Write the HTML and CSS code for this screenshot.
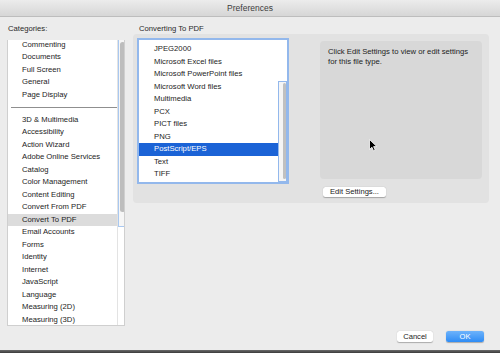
FILE: index.html
```html
<!DOCTYPE html>
<html>
<head>
<meta charset="utf-8">
<link rel="stylesheet" href="styles.css">
</head>
<body>
<div class="window">
  <div class="titlebar">Preferences</div>
  <div class="main">
    <div class="cats">
      <div class="label">Categories:</div>
      <div class="catlist">
        <div class="catitems">
          <div class="row">Commenting</div>
          <div class="row">Documents</div>
          <div class="row">Full Screen</div>
          <div class="row">General</div>
          <div class="row">Page Display</div>
          <div class="sep"></div>
          <div class="row">3D &amp; Multimedia</div>
          <div class="row">Accessibility</div>
          <div class="row">Action Wizard</div>
          <div class="row">Adobe Online Services</div>
          <div class="row">Catalog</div>
          <div class="row">Color Management</div>
          <div class="row">Content Editing</div>
          <div class="row">Convert From PDF</div>
          <div class="row current">Convert To PDF</div>
          <div class="row">Email Accounts</div>
          <div class="row">Forms</div>
          <div class="row">Identity</div>
          <div class="row">Internet</div>
          <div class="row">JavaScript</div>
          <div class="row">Language</div>
          <div class="row">Measuring (2D)</div>
          <div class="row">Measuring (3D)</div>
        </div>
        <div class="vscroll"><div class="track"><div class="thumb"></div></div></div>
      </div>
    </div>
    <div class="pane">
      <div class="label pane-label">Converting To PDF</div>
      <div class="group">
        <div class="typelist">
          <div class="types">
            <div class="trow">JPEG2000</div>
            <div class="trow">Microsoft Excel files</div>
            <div class="trow">Microsoft PowerPoint files</div>
            <div class="trow">Microsoft Word files</div>
            <div class="trow">Multimedia</div>
            <div class="trow">PCX</div>
            <div class="trow">PICT files</div>
            <div class="trow">PNG</div>
            <div class="trow selected">PostScript/EPS</div>
            <div class="trow">Text</div>
            <div class="trow">TIFF</div>
          </div>
          <div class="tscroll"><div class="tthumb"></div></div>
        </div>
        <div class="detail">
          <div class="desc">Click Edit Settings to view or edit settings for this file type.</div>
          <button class="btn edit">Edit Settings...</button>
        </div>
      </div>
    </div>
  </div>
  <div class="footer">
    <button class="btn cancel">Cancel</button>
    <button class="btn primary">OK</button>
  </div>
  <div class="strip"></div>
  <svg class="cursor" width="9" height="13" viewBox="0 0 9 13">
    <path d="M0.5 0.5 L0.5 10.5 L2.9 8.2 L4.6 11.9 L6.2 11.2 L4.6 7.6 L7.8 7.6 Z" fill="#000" stroke="#fff" stroke-width="0.8"/>
  </svg>
</div>
</body>
</html>
```
FILE: styles.css
```css
* { box-sizing: border-box; }
html, body { margin: 0; padding: 0; }
body {
  width: 500px;
  height: 353px;
  overflow: hidden;
  background: #ececec;
  font-family: "Liberation Sans", Arial, sans-serif;
  font-size: 7.7px;
  color: #1c1c1c;
}
.window {
  position: relative;
  width: 500px;
  height: 353px;
  display: flex;
  flex-direction: column;
}
.titlebar {
  height: 17px;
  line-height: 17px;
  text-align: center;
  font-size: 8.5px;
  color: #3d3d3d;
  background: linear-gradient(#ececec, #d6d6d6);
  border-bottom: 1px solid #bdbdbd;
}
.main {
  display: flex;
  padding-left: 7px;
  height: 309px;
}
.cats { width: 118px; }
.label {
  margin-top: 7px;
  height: 10px;
  line-height: 10px;
  padding-left: 1px;
  color: #2a2a2a;
}
.cats .label { margin-bottom: 6px; }
.catlist {
  height: 286px;
  background: #fff;
  border: 1px solid #cfcfcf;
  border-top: none;
  display: flex;
  overflow: hidden;
}
.catitems {
  flex: 1;
  padding-top: 0;
  margin-top: -1.5px;
}
.row {
  height: 12.5px;
  line-height: 12.5px;
  padding-left: 14px;
  white-space: nowrap;
}
.row.current { background: #dcdcdc; }
.sep {
  height: 12.5px;
  padding: 6px 0 0 3px;
}
.sep::after {
  content: "";
  display: block;
  height: 1px;
  background: #8f8f8f;
}
.vscroll {
  width: 7px;
  border-left: 1px solid #e3e3e3;
  margin-left: -1px;
}
.track {
  height: 187px;
  border-left: 1px solid #a9c8f0;
  border-bottom: 1px solid #a9c8f0;
  background: #f6f6f6;
  padding: 2px 1px 0 1px;
}
.thumb {
  width: 5px;
  height: 170px;
  border-radius: 3px;
  background: #bdbdbd;
}
.pane {
  margin-left: 8px;
  width: 356px;
}
.pane-label { padding-left: 6px; }
.group {
  height: 169px;
  background: #e2e2e2;
  border-radius: 4px;
  padding: 4px;
  display: flex;
  align-items: flex-start;
}
.typelist {
  width: 152px;
  height: 146px;
  background: #fff;
  border: 2px solid #93b8ec;
  display: flex;
}
.types {
  flex: 1;
  padding-top: 3px;
}
.trow {
  height: 12.5px;
  line-height: 12.5px;
  padding-left: 15px;
  white-space: nowrap;
  margin-right: -2px;
}
.trow.selected {
  background: #1b63d6;
  color: #fff;
}
.tscroll {
  width: 9px;
  height: 101px;
  margin-top: 41px;
  border: 1px solid #93b8ec;
  background: #f5f5f5;
  position: relative;
}
.tthumb {
  width: 3px;
  height: 96px;
  margin: 1px 0 0 4px;
  border-radius: 2px;
  background: #c0c0c0;
}
.detail {
  margin-left: 31px;
  padding-top: 3px;
}
.desc {
  width: 162px;
  height: 138px;
  background: #d8d8d8;
  border-radius: 4px;
  padding: 6px 8px 0 8px;
  line-height: 10px;
}
.btn {
  font-family: "Liberation Sans", Arial, sans-serif;
  font-size: 7.6px;
  color: #222;
  background: #fff;
  border: none;
  border-radius: 2.5px;
  box-shadow: 0 0.5px 1px rgba(0,0,0,0.28);
  padding: 0;
  height: 11px;
  line-height: 11px;
  text-align: center;
}
.btn.edit {
  display: block;
  margin: 8px 0 0 3px;
  width: 63px;
  height: 10px;
  line-height: 10px;
}
.footer {
  display: flex;
  justify-content: flex-end;
  gap: 13px;
  padding-right: 16px;
  margin-top: 5px;
  height: 11px;
}
.cancel { width: 36px; }
.primary {
  width: 38px;
  color: #fff;
  background: linear-gradient(#6db3fb, #2f8cf5);
}
.strip {
  margin-top: 8px;
  height: 3px;
  background: linear-gradient(#6a6a6a, #3a3a3a);
}
.cursor {
  position: absolute;
  left: 369px;
  top: 139px;
}
```
